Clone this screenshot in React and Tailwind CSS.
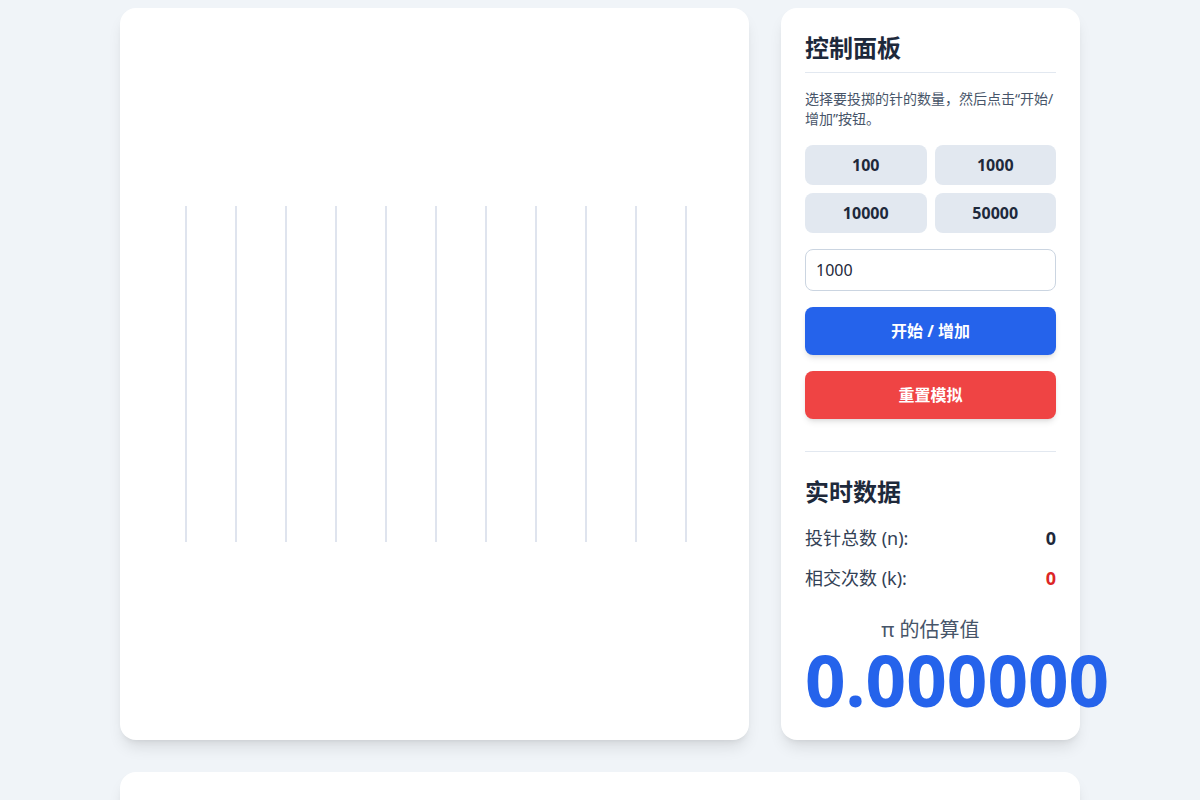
const lineXs = [1, 51, 101, 151, 201, 251, 301, 351, 401, 451, 501];

const presets = [100, 1000, 10000, 50000];

const App = () => {
  return (
    <div
      className="min-h-screen bg-[#f0f4f8] pt-2"
      style={{ fontFamily: '"Noto Sans", "Noto Sans CJK SC", sans-serif' }}
    >
      <div className="w-[960px] mx-auto">
        <div className="flex gap-8">
          {/* canvas area */}
          <div className="flex-1 h-[732px] bg-white rounded-2xl shadow-lg flex items-center justify-center pl-[3px]">
            <svg width="502" height="336" viewBox="0 0 502 336">
              {lineXs.map((x) => (
                <line key={x} x1={x} y1="0" x2={x} y2="336" stroke="#dfe4ee" strokeWidth="2" />
              ))}
            </svg>
          </div>

          {/* control panel */}
          <div className="w-[299px] h-[732px] bg-white rounded-2xl shadow-lg p-6">
            <h2 className="text-2xl font-bold text-[#1e293b] pb-2 border-b border-[#e2e8f0]">控制面板</h2>
            <p className="mt-4 text-sm text-[#475569]">选择要投掷的针的数量，然后点击“开始/增加”按钮。</p>
            <div className="grid grid-cols-2 gap-2 mt-4">
              {presets.map((n) => (
                <button key={n} className="h-10 rounded-lg bg-[#e2e8f0] font-bold text-[#1e293b]">
                  {n}
                </button>
              ))}
            </div>
            <input
              type="number"
              defaultValue={1000}
              className="mt-4 w-full h-[42px] px-2.5 border border-[#cbd5e1] rounded-lg text-[#1e293b] outline-none"
            />
            <button className="mt-4 w-full h-12 rounded-lg bg-[#2563eb] text-white font-bold shadow-md">
              开始 / 增加
            </button>
            <button className="mt-4 w-full h-12 rounded-lg bg-[#ef4444] text-white font-bold shadow-md">
              重置模拟
            </button>
            <hr className="mt-8 mb-6 border-[#e2e8f0]" />
            <h2 className="text-2xl font-bold text-[#1e293b]">实时数据</h2>
            <div className="mt-4 flex flex-col gap-3 text-lg">
              <div className="flex justify-between h-7 items-center">
                <span className="text-[#334155]">投针总数 (n):</span>
                <span className="font-bold text-[#1e293b]">0</span>
              </div>
              <div className="flex justify-between h-7 items-center">
                <span className="text-[#334155]">相交次数 (k):</span>
                <span className="font-bold text-[#dc2626]">0</span>
              </div>
            </div>
            <div className="mt-6 text-center">
              <div className="text-xl text-[#475569]">π 的估算值</div>
              <div className="text-[71px] leading-none font-bold text-[#2563eb]">0.000000</div>
            </div>
          </div>
        </div>

        <div className="mt-8 h-[200px] bg-white rounded-2xl shadow-lg"></div>
      </div>
    </div>
  );
};

export default App;
